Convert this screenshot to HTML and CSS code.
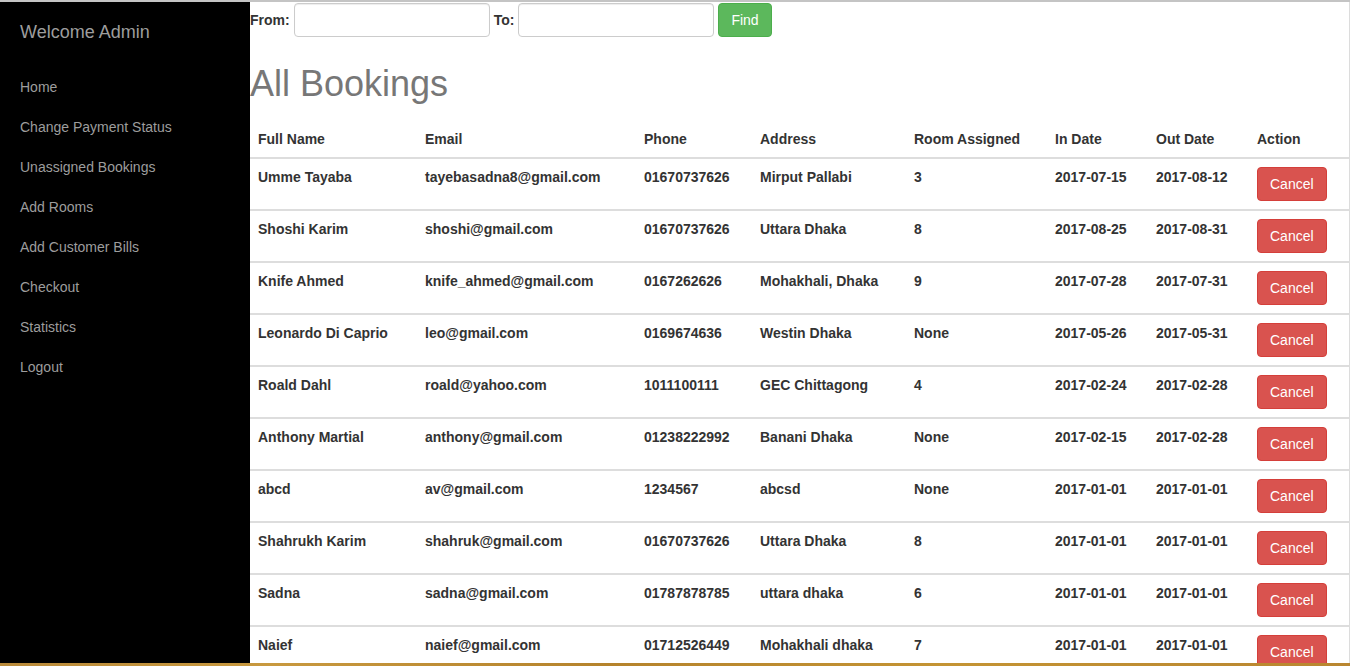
FILE: index.html
```html
<!DOCTYPE html>
<html>
<head>
<meta charset="utf-8">
<title>All Bookings</title>
<link rel="stylesheet" href="styles.css">
</head>
<body>
<div class="frame">
  <aside class="sidebar">
    <div class="brand">Welcome Admin</div>
    <nav class="nav">
      <a href="#">Home</a>
      <a href="#">Change Payment Status</a>
      <a href="#">Unassigned Bookings</a>
      <a href="#">Add Rooms</a>
      <a href="#">Add Customer Bills</a>
      <a href="#">Checkout</a>
      <a href="#">Statistics</a>
      <a href="#">Logout</a>
    </nav>
  </aside>
  <main class="main">
    <form class="filter">
      <label class="lbl">From:</label><input type="text" class="field"><label class="lbl">To:</label><input type="text" class="field"><button type="button" class="btn btn-find">Find</button>
    </form>
    <h1 class="title">All Bookings</h1>
    <table class="bookings">
      <colgroup>
        <col class="c1"><col class="c2"><col class="c3"><col class="c4"><col class="c5"><col class="c6"><col class="c7"><col class="c8">
      </colgroup>
      <thead>
        <tr><th>Full Name</th><th>Email</th><th>Phone</th><th>Address</th><th>Room Assigned</th><th>In Date</th><th>Out Date</th><th>Action</th></tr>
      </thead>
      <tbody>
        <tr><td>Umme Tayaba</td><td>tayebasadna8@gmail.com</td><td>01670737626</td><td>Mirput Pallabi</td><td>3</td><td>2017-07-15</td><td>2017-08-12</td><td><button class="btn btn-cancel">Cancel</button></td></tr>
        <tr><td>Shoshi Karim</td><td>shoshi@gmail.com</td><td>01670737626</td><td>Uttara Dhaka</td><td>8</td><td>2017-08-25</td><td>2017-08-31</td><td><button class="btn btn-cancel">Cancel</button></td></tr>
        <tr><td>Knife Ahmed</td><td>knife_ahmed@gmail.com</td><td>0167262626</td><td>Mohakhali, Dhaka</td><td>9</td><td>2017-07-28</td><td>2017-07-31</td><td><button class="btn btn-cancel">Cancel</button></td></tr>
        <tr><td>Leonardo Di Caprio</td><td>leo@gmail.com</td><td>0169674636</td><td>Westin Dhaka</td><td>None</td><td>2017-05-26</td><td>2017-05-31</td><td><button class="btn btn-cancel">Cancel</button></td></tr>
        <tr><td>Roald Dahl</td><td>roald@yahoo.com</td><td>1011100111</td><td>GEC Chittagong</td><td>4</td><td>2017-02-24</td><td>2017-02-28</td><td><button class="btn btn-cancel">Cancel</button></td></tr>
        <tr><td>Anthony Martial</td><td>anthony@gmail.com</td><td>01238222992</td><td>Banani Dhaka</td><td>None</td><td>2017-02-15</td><td>2017-02-28</td><td><button class="btn btn-cancel">Cancel</button></td></tr>
        <tr><td>abcd</td><td>av@gmail.com</td><td>1234567</td><td>abcsd</td><td>None</td><td>2017-01-01</td><td>2017-01-01</td><td><button class="btn btn-cancel">Cancel</button></td></tr>
        <tr><td>Shahrukh Karim</td><td>shahruk@gmail.com</td><td>01670737626</td><td>Uttara Dhaka</td><td>8</td><td>2017-01-01</td><td>2017-01-01</td><td><button class="btn btn-cancel">Cancel</button></td></tr>
        <tr><td>Sadna</td><td>sadna@gmail.com</td><td>01787878785</td><td>uttara dhaka</td><td>6</td><td>2017-01-01</td><td>2017-01-01</td><td><button class="btn btn-cancel">Cancel</button></td></tr>
        <tr><td>Naief</td><td>naief@gmail.com</td><td>01712526449</td><td>Mohakhali dhaka</td><td>7</td><td>2017-01-01</td><td>2017-01-01</td><td><button class="btn btn-cancel">Cancel</button></td></tr>
      </tbody>
    </table>
  </main>
</div>
<div class="taskbar"></div>
</body>
</html>
```

FILE: styles.css
```css
* { box-sizing: border-box; }

html, body {
  margin: 0;
  padding: 0;
  height: 666px;
  overflow: hidden;
}

body {
  font-family: "Liberation Sans", Arial, sans-serif;
  font-size: 14px;
  line-height: 20px;
  color: #333;
  background: #fff;
  border-top: 2px solid #c4c4c4;
  display: flex;
  flex-direction: column;
}

.frame {
  display: flex;
  height: 661px;
  overflow: hidden;
}

.sidebar {
  width: 250px;
  flex: 0 0 250px;
  background: #000;
}

.brand {
  padding: 20px 20px 25px;
  font-size: 18px;
  line-height: 20px;
  color: #9d9d9d;
}

.nav {
  display: flex;
  flex-direction: column;
}

.nav a {
  display: block;
  padding: 10px 20px;
  line-height: 20px;
  color: #9d9d9d;
  text-decoration: none;
}

.main {
  flex: 1;
  border-right: 1px solid #dcdcdc;
  overflow: hidden;
}

.filter {
  margin: 1px 0 0;
  height: 34px;
  display: flex;
  align-items: center;
}

.lbl {
  font-weight: bold;
  margin-right: 4px;
}

.field {
  width: 196px;
  height: 34px;
  margin-right: 4px;
  border: 1px solid #ccc;
  border-radius: 4px;
  background: #fff;
  box-shadow: inset 0 1px 1px rgba(0,0,0,0.075);
  padding: 6px 12px;
  font: inherit;
}

.btn {
  display: inline-block;
  height: 34px;
  padding: 6px 12px;
  font-family: inherit;
  font-size: 14px;
  line-height: 20px;
  border-radius: 4px;
  border: 1px solid transparent;
  color: #fff;
  cursor: pointer;
}

.btn-find {
  background: #5cb85c;
  border-color: #4cae4c;
}

.btn-cancel {
  background: #d9534f;
  border-color: #d43f3a;
  vertical-align: top;
}

.title {
  margin: 27px 0 17px;
  font-size: 36px;
  font-weight: normal;
  line-height: 40px;
  color: #777;
}

.bookings {
  width: 1099px;
  table-layout: fixed;
  border-collapse: collapse;
  border-spacing: 0;
}

.c1 { width: 167px; }
.c2 { width: 219px; }
.c3 { width: 116px; }
.c4 { width: 154px; }
.c5 { width: 141px; }
.c6 { width: 101px; }
.c7 { width: 101px; }
.c8 { width: 100px; }

.bookings th,
.bookings td {
  padding: 8px;
  text-align: left;
  vertical-align: top;
  font-weight: bold;
  line-height: 20px;
  white-space: nowrap;
}

.bookings th {
  border-bottom: 2px solid #ddd;
}

.bookings td {
  border-top: 2px solid #ddd;
}

.taskbar {
  height: 3px;
  background: linear-gradient(90deg, #b98a3a 0%, #c8993f 20%, #b5832c 45%, #c49434 70%, #b98630 100%);
}
```
